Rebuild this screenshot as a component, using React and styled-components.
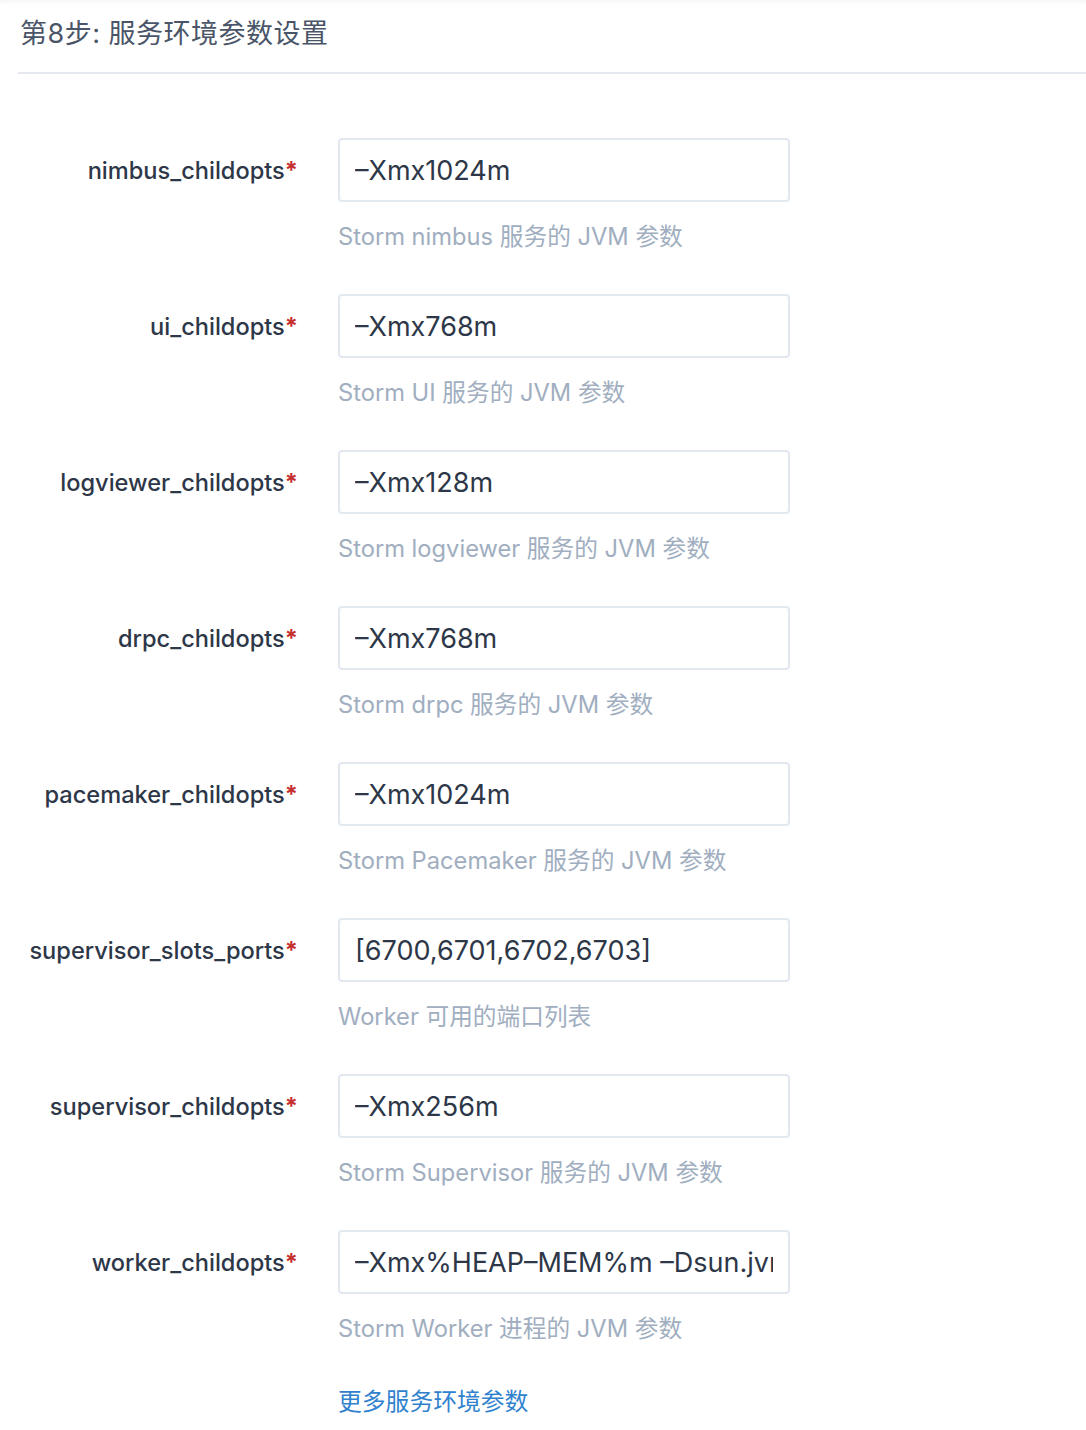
import React from "react";
import styled, { createGlobalStyle } from "styled-components";

const GlobalStyle = createGlobalStyle`
	body {
		margin: 0;
		background: #fff;
		font-family: Inter, "Noto Sans CJK SC", sans-serif;
	}
`;

const fields = [
	{ name: "nimbus_childopts", value: "–Xmx1024m", help: "Storm nimbus 服务的 JVM 参数" },
	{ name: "ui_childopts", value: "–Xmx768m", help: "Storm UI 服务的 JVM 参数" },
	{ name: "logviewer_childopts", value: "–Xmx128m", help: "Storm logviewer 服务的 JVM 参数" },
	{ name: "drpc_childopts", value: "–Xmx768m", help: "Storm drpc 服务的 JVM 参数" },
	{ name: "pacemaker_childopts", value: "–Xmx1024m", help: "Storm Pacemaker 服务的 JVM 参数" },
	{ name: "supervisor_slots_ports", value: "[6700,6701,6702,6703]", help: "Worker 可用的端口列表" },
	{ name: "supervisor_childopts", value: "–Xmx256m", help: "Storm Supervisor 服务的 JVM 参数" },
	{ name: "worker_childopts", value: "–Xmx%HEAP–MEM%m –Dsun.jvm.hotspot", help: "Storm Worker 进程的 JVM 参数" },
];

const App = () => {
	return (
		<Page>
			<GlobalStyle />
			<Header>
				<Title>第8步: 服务环境参数设置</Title>
			</Header>
			<Form>
				{fields.map((f) => (
					<Row key={f.name}>
						<Label>
							{f.name}
							<Required>*</Required>
						</Label>
						<Field>
							<Input defaultValue={f.value} />
							<Help>{f.help}</Help>
						</Field>
					</Row>
				))}
				<Row>
					<span />
					<MoreLink href="#">更多服务环境参数</MoreLink>
				</Row>
			</Form>
		</Page>
	);
};

const Page = styled.div`
	min-height: 1430px;
	box-shadow: inset 0 7px 7px -7px rgba(0, 0, 0, 0.08);
	padding-left: 18px;
`;

const Header = styled.div`
	box-sizing: border-box;
	height: 74px;
	border-bottom: 2px solid #e5e9ef;
	display: flex;
	align-items: center;
	padding-left: 2px;
`;

const Title = styled.h2`
	margin: 0 0 10px;
	font-size: 27px;
	font-weight: 400;
	color: #4a5568;
	font-family: Inter, "Noto Sans CJK SC", sans-serif;
	letter-spacing: 0.5px;
`;

const Form = styled.div`
	padding-top: 64px;
	display: flex;
	flex-direction: column;
`;

const Row = styled.div`
	display: grid;
	grid-template-columns: 280px 452px;
	column-gap: 40px;
	margin-bottom: 42px;
`;

const Label = styled.label`
	height: 64px;
	display: flex;
	align-items: center;
	justify-content: flex-end;
	font-size: 23.6px;
	font-weight: 500;
	color: #2d3748;
	white-space: nowrap;
`;

const Required = styled.span`
	color: #c53030;
	font-weight: 700;
`;

const Field = styled.div`
	display: flex;
	flex-direction: column;
`;

const Input = styled.input`
	box-sizing: border-box;
	width: 452px;
	height: 64px;
	border: 2px solid #e2e8f0;
	border-radius: 4px;
	padding: 0 15px;
	font-family: Inter, "Noto Sans CJK SC", sans-serif;
	font-size: 27px;
	color: #2d3748;
	outline: none;
`;

const Help = styled.div`
	margin-top: 20px;
	height: 30px;
	line-height: 30px;
	font-size: 23.7px;
	color: #a0aec0;
	font-family: Inter, "Noto Sans CJK SC", sans-serif;
`;

const MoreLink = styled.a`
	margin-top: -1px;
	font-size: 23.8px;
	line-height: 30px;
	color: #3182ce;
	text-decoration: none;
	font-family: "Noto Sans CJK SC", Inter, sans-serif;
`;

export default App;
